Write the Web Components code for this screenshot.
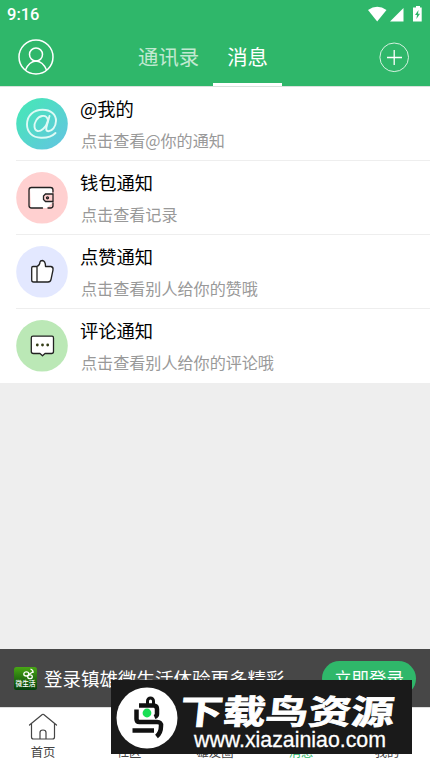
<!DOCTYPE html>
<html lang="zh-CN">
<head>
<meta charset="utf-8">
<title>消息</title>
<style>
html,body{margin:0;height:100%;overflow:hidden}
body{background:#eee;font-family:"Noto Sans CJK SC",sans-serif;color:#111}
</style>
</head>
<body>
<message-app></message-app>
<script>
const define=(name,html)=>customElements.define(name,class extends HTMLElement{
  constructor(){
    super();
    const t=document.createElement('template');
    t.innerHTML=html;
    this.attachShadow({mode:'open'}).append(t.content.cloneNode(true));
  }
});

define('status-bar',`<style>
:host{display:flex;height:29px;box-sizing:border-box;padding:0 6px 0 7px;align-items:center;justify-content:space-between;color:#fff;font:500 16.500px/30px Roboto,sans-serif}
span{padding-top:1px}
svg{display:block}
</style><span>9:16</span>
<svg width="57" height="29" viewBox="0 0 57 29" fill="#fff"><path d="M1 10Q10.200 3.400 19.500 10L10.200 21.500Z"/><path d="M36.500 8V21.500H23Z"/><path fill-rule="evenodd" d="M48 7.500H49V6H53V7.500H54.700V21.500H46V7.500ZM51.500 10L48 15H50L49.400 19L53 13.700H51Z"/></svg>`);

define('top-bar',`<style>
:host{display:grid;grid-template-columns:123px 1fr 123px;height:57px}
.left{padding:10px 0 0 17px}.right{padding:12px 0 0 71px}
svg{display:block;fill:none;stroke:#fff}
.tabs{display:flex;padding-left:1px}
::slotted(span){height:54px;line-height:55px;font-size:20.400px;padding:0 14px;color:#c1e9d1;white-space:nowrap;border-bottom:3px solid transparent}
::slotted(.active){color:#fff;border-color:#fff}
</style><div class="left"><svg width="38" height="38" viewBox="0 0 38 38" stroke-width="1.500"><circle cx="19" cy="18" r="17"/><circle cx="19" cy="15.500" r="6.500"/><path d="M8.500 31Q12 22.500 19 22Q26 22.500 29.500 31"/></svg></div><div class="tabs"><slot></slot></div><div class="right"><svg width="32" height="32" viewBox="0 0 32 32"><circle cx="16.200" cy="16.300" r="14.300" stroke="#d5f1e0"/><path d="M16.200 9V24M9 16.500H24" stroke-width="1.300"/></svg></div>`);

define('notice-row',`<style>
:host{display:flex;height:74px;box-sizing:border-box;padding-left:16px;background:#fff}
.icon{flex:none;width:52px;height:52px;margin-top:11px}
.body{flex:1;margin-left:12px;padding-top:4px;white-space:nowrap}
.wrap{flex:1;display:flex;border-bottom:1px solid #eee}
:host(.last) .wrap{border-color:#fff}
.title{height:34px;line-height:34px;font-size:18.300px;color:#000}
.sub{line-height:30px;font-size:16.080px;color:#999;padding-left:1px}
::slotted(svg){display:block}
</style><div class="wrap"><div class="icon"><slot name="icon"></slot></div><div class="body"><div class="title"><slot name="title"></slot></div><div class="sub"><slot></slot></div></div></div>`);

define('login-strip',`<style>
:host{display:flex;height:58px;background:#474747;color:#fff;align-items:center;padding:0 14px;white-space:nowrap}
svg{display:block;flex:none;width:23px;height:23px}
.msg{font-size:18.500px;line-height:30px;margin-left:7px;flex:1}
.btn{flex:none;width:94px;height:35px;line-height:34px;border-radius:18px;background:#2fb76a;text-align:center;font-size:17.400px}
</style><svg viewBox="0 0 23 23"><defs><linearGradient id="g" x2="0" y2="1"><stop stop-color="#48a714"/><stop offset="1" stop-color="#033e0c"/></linearGradient></defs><rect width="23" height="23" rx="2.500" fill="url(#g)"/><g fill="none" stroke="#fff" stroke-width="1.300"><ellipse cx="12.300" cy="6.900" rx="2.500" ry="2.100"/><ellipse cx="16" cy="9.700" rx="2.300" ry="1.900"/><path d="M14 8L19.500 4.500M16.500 2Q19.500 3 19 6"/></g><text x="1.500" y="19" font-size="7.300" font-weight="500" fill="#fff" textLength="20" lengthAdjust="spacingAndGlyphs">微生活</text></svg><span class="msg"><slot></slot></span><span class="btn"><slot name="action"></slot></span>`);

define('nav-item',`<style>
:host{display:flex;flex-direction:column;align-items:center;flex:1;color:#444;font-size:12.300px;line-height:18px}
:host(.active){color:#2fb76a}
.icon{height:35px}
::slotted(svg){display:block}
</style><div class="icon"><slot name="icon"></slot></div><slot></slot>`);

define('tab-bar',`<style>
:host{display:flex;height:57px;background:#fff;box-sizing:border-box;border-top:1px solid #ddd}
</style><slot></slot>`);

define('site-badge',`<style>
:host{display:block;width:301px;height:74px;background:#1a1a1a}
svg{display:block}
</style><svg width="301" height="74" viewBox="0 0 301 74"><circle cx="36" cy="38" r="30.500" fill="#fff"/>
<g fill="none" stroke="#111" stroke-width="4.500" stroke-linejoin="round"><path d="M28 25.500H43Q46 26 46 29V34Q46 36 43.500 37"/><path d="M25.500 29.500V39Q25.500 42 28.500 42H46Q50.500 42 50 46Q50 53 45.500 56.500"/><path d="M21.500 50.500H43"/><path d="M36.500 24V21A3 3 0 0 1 42.500 21V24" stroke-width="3"/></g><circle cx="36" cy="33" r="4.400" fill="#19df55"/>
<text transform="translate(68 43.500) skewX(-6)" font-size="33.500" font-weight="700" fill="#fff" stroke="#fff" stroke-width=".8" textLength="214" lengthAdjust="spacingAndGlyphs">下载鸟资源</text>
<text x="83" y="67" font-family="Liberation Sans,sans-serif" font-size="22" fill="#fff" stroke="#fff" stroke-width=".3" textLength="192" lengthAdjust="spacingAndGlyphs">www.xiazainiao.com</text></svg>`);

define('message-app',`<style>
:host{display:flex;flex-direction:column;width:430px;height:764px;position:relative;overflow:hidden;background:#eee}
header{background:#2fb76a;height:86px}
main{flex:1;box-sizing:border-box;border-top:1px solid #d9e2dd}
site-badge{position:absolute;left:111px;top:680px}
</style>
<header><status-bar></status-bar><top-bar><span>通讯录</span><span class="active">消息</span></top-bar></header>
<main>
<notice-row><svg slot="icon" width="52" height="52"><defs><linearGradient id="a" x2="1" y2="1"><stop offset=".2" stop-color="#4be2bd"/><stop offset="1" stop-color="#64c3e3"/></linearGradient></defs><circle cx="26" cy="25.800" r="25.800" fill="url(#a)"/><g fill="none" stroke="#dffaf5" stroke-width="1.900" stroke-linecap="round"><path d="M39.500 35C36 38.500 31 40 25 39.800C16 39.500 11 34 11 26.500C11 17.500 17.500 11.700 26.500 11.700C35 11.700 40.200 16.500 40 23C39.800 29 36 33.200 32.500 33.200C29.500 33.200 30 30.500 31 27L33.500 18"/><path d="M32 22C31 18.500 28.500 17.500 26 18C21 19 18 25 18.500 29C19 33.500 23 34.500 27 31C29.500 29 31.300 25.500 32 22"/></g></svg><span slot="title">@我的</span>点击查看@你的通知</notice-row>
<notice-row><svg slot="icon" width="52" height="52" fill="none" stroke="#222" stroke-width="1.300" stroke-linecap="round"><circle cx="26" cy="25.800" r="25.800" fill="#ffd0d0" stroke="none"/><path fill="#fff" stroke="none" d="M14 16H36V31L31 36H15Z"/><path d="M37 20V18Q37 15.500 34.500 15.500H15.500Q13 15.500 13 18V33.500Q13 36 15.500 36H26.500M37 31V33.500Q37 36 34.500 36H32"/><path d="M37 22H29.500L27.500 24V27.500L29.500 29.500H37Z" fill="#ffd0d0"/><circle cx="31.500" cy="25.800" r="1"/></svg><span slot="title">钱包通知</span>点击查看记录</notice-row>
<notice-row><svg slot="icon" width="52" height="52" fill="#fff" stroke="#222" stroke-width="1.300" stroke-linejoin="round"><circle cx="26" cy="25.800" r="25.800" fill="#e3e8ff" stroke="none"/><path d="M21 20.500H17Q15.700 20.500 15.700 22V34Q15.700 36 17.500 36H21ZM21 20.500Q24 19 24 16Q24.300 14.500 26.500 14.500Q29.500 15 29.500 20.500H35Q37.500 21 37 24L35 33.500Q34.500 36 32 36H21"/></svg><span slot="title">点赞通知</span>点击查看别人给你的赞哦</notice-row>
<notice-row class="last"><svg slot="icon" width="52" height="52" fill="#fff" stroke="#222" stroke-width="1.300" stroke-linejoin="round"><circle cx="26" cy="25.800" r="25.800" fill="#bbe8b6" stroke="none"/><path d="M17 16.200H36Q37.500 16.200 37.500 18V31.500Q37.500 33.500 35.500 33.500H29L26.500 35.700L24 33.500H17.500Q15.300 33.500 15.300 31.500V18Q15.300 16.200 17 16.200Z"/><g fill="#343d16" stroke="none"><circle cx="21.300" cy="25" r="1.400"/><circle cx="26.500" cy="25" r="1.400"/><circle cx="31.700" cy="25" r="1.400"/></g></svg><span slot="title">评论通知</span>点击查看别人给你的评论哦</notice-row>
</main>
<login-strip>登录镇雄微生活体验更多精彩<span slot="action">立即登录</span></login-strip>
<tab-bar>
<nav-item><svg slot="icon" width="30" height="35" fill="none" stroke="#444" stroke-width="1.200" stroke-linejoin="round" stroke-linecap="round"><path d="M1.500 17L14.300 6.500Q15 6 15.700 6.500L28.500 17M3.500 15.500V29Q3.500 31 5.500 31H24.500Q26.500 31 26.500 29V15.500M12 31V24.500Q12 22 15 22Q18 22 18 24.500V31"/></svg>首页</nav-item>
<nav-item>社区</nav-item><nav-item>雄友圈</nav-item><nav-item class="active">消息</nav-item><nav-item>我的</nav-item>
</tab-bar>
<site-badge></site-badge>`);
</script>
</body>
</html>
